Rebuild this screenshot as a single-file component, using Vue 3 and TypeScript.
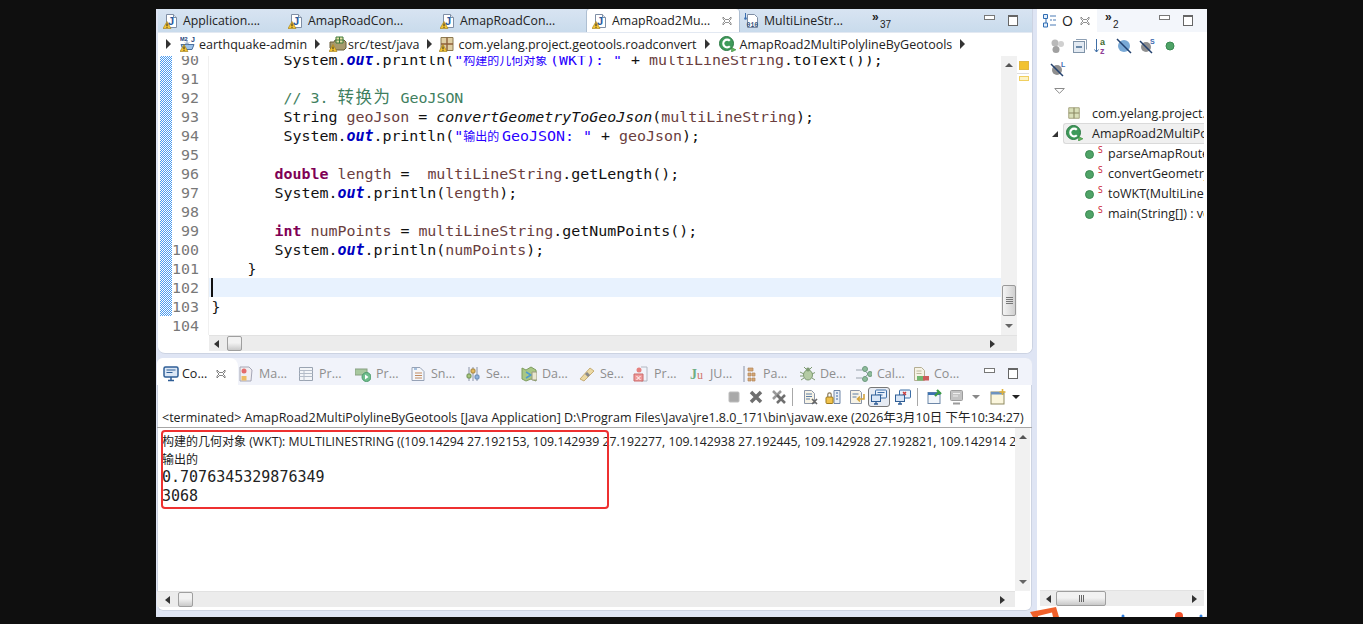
<script setup lang="ts">
type Seg = [string, string]

const editorTabs = [
  { label: 'Application....', icon: 'java', w: 125 },
  { label: 'AmapRoadCon...', icon: 'java', w: 152 },
  { label: 'AmapRoadCon...', icon: 'java', w: 152 },
  { label: 'AmapRoad2Mu...', icon: 'java', w: 152, active: true },
  { label: 'MultiLineStr...', icon: 'classfile', w: 112 },
]

const consoleTabs = [
  { label: 'Ma...', icon: 'markers', w: 60 },
  { label: 'Pr...', icon: 'table', w: 57 },
  { label: 'Pr...', icon: 'progress', w: 55 },
  { label: 'Sn...', icon: 'snippets', w: 55 },
  { label: 'Se...', icon: 'servers', w: 56 },
  { label: 'Da...', icon: 'map', w: 58 },
  { label: 'Se...', icon: 'search', w: 54 },
  { label: 'Pr...', icon: 'problems', w: 56 },
  { label: 'JU...', icon: 'junit', w: 53 },
  { label: 'Pa...', icon: 'package', w: 57 },
  { label: 'De...', icon: 'bug', w: 57 },
  { label: 'Cal...', icon: 'callhier', w: 57 },
  { label: 'Co...', icon: 'coverage', w: 50 },
]

const code: { n: number; segs: Seg[]; cur?: boolean }[] = [
  { n: 90, segs: [['', '        System.'], ['fld', 'out'], ['', '.println('], ['str', '"'], ['str zh', '构建的几何对象 '], ['str', '(WKT): "'], ['', ' + '], ['var', 'multiLineString'], ['', '.toText());']] },
  { n: 91, segs: [] },
  { n: 92, segs: [['', '        '], ['cmt', '// 3. '], ['cmt wide', '转换为'], ['cmt', ' GeoJSON']] },
  { n: 93, segs: [['', '        String '], ['var', 'geoJson'], ['', ' = '], ['it', 'convertGeometryToGeoJson'], ['', '('], ['var', 'multiLineString'], ['', ');']] },
  { n: 94, segs: [['', '        System.'], ['fld', 'out'], ['', '.println('], ['str', '"'], ['str zh', '输出的 '], ['str', 'GeoJSON: "'], ['', ' + '], ['var', 'geoJson'], ['', ');']] },
  { n: 95, segs: [] },
  { n: 96, segs: [['', '       '], ['kw', 'double'], ['', ' '], ['var', 'length'], ['', ' =  '], ['var', 'multiLineString'], ['', '.getLength();']] },
  { n: 97, segs: [['', '       System.'], ['fld', 'out'], ['', '.println('], ['var', 'length'], ['', ');']] },
  { n: 98, segs: [] },
  { n: 99, segs: [['', '       '], ['kw', 'int'], ['', ' '], ['var', 'numPoints'], ['', ' = '], ['var', 'multiLineString'], ['', '.getNumPoints();']] },
  { n: 100, segs: [['', '       System.'], ['fld', 'out'], ['', '.println('], ['var', 'numPoints'], ['', ');']] },
  { n: 101, segs: [['', '    }']] },
  { n: 102, segs: [], cur: true },
  { n: 103, segs: [['', '}']] },
  { n: 104, segs: [] },
]

const methods = ['parseAmapRoute', 'convertGeometryToGeoJson', 'toWKT(MultiLineString)', 'main(String[]) : void']
const firstLine =
  ' (WKT): MULTILINESTRING ((109.14294 27.192153, 109.142939 27.192277, 109.142938 27.192445, 109.142928 27.192821, 109.142914 27.193012, 109.142901'
</script>

<template>
  <div class="screen">
    <svg class="sprite" aria-hidden="true">
      <defs>
        <symbol id="warn" viewBox="0 0 16 16"><path d="M4 8.500 8 15.500H0z" fill="#f4c331" stroke="#a07c14" stroke-width=".6" /><path d="M4 10.500v2.600M4 13.800v1" stroke="#222" /></symbol>
        <symbol id="java" viewBox="0 0 16 16"><path d="M3.500 1.500h7l3 3v10h-10z" fill="#fff" stroke="#7f8ea5" /><path d="M10.500 1.500v3h3" fill="#dfe6f0" stroke="#7f8ea5" /><text x="5" y="12" font-family="Liberation Sans" font-size="11" font-weight="700" fill="#2b5a9e">J</text></symbol>
        <symbol id="classfile" viewBox="0 0 16 16"><path d="M3.500 1.500h7l3 3v10h-10z" fill="#fff" stroke="#7f8ea5" /><path d="M1.500 0v5" stroke="#3b6fb0" /><circle cx="1.500" cy="5.500" r="1.300" fill="#3b6fb0" /><text x="2.500" y="14" font-family="Liberation Mono" font-size="6.500" font-weight="700" fill="#30507c">010</text></symbol>
        <symbol id="mvn" viewBox="0 0 16 16"><path d="M1 8.500h13l-2 5H3z" fill="#9dc3ea" stroke="#4a6f9e" /><path d="M7 4v4M5 6.500 7 8.500l2-2" fill="none" stroke="#7b96b8" /><text x="0" y="5" font-family="Liberation Sans" font-size="5.500" font-weight="700" fill="#23427a">M2</text><text x="11" y="6" font-family="Liberation Sans" font-size="7" font-weight="700" fill="#23427a">J</text></symbol>
        <symbol id="srcf" viewBox="0 0 18 16"><path d="M1 6h4l1-2h9l2 2v6l-2 2H3l-2-2z" fill="#a89a6c" stroke="#6a5f3c" /><path d="M7 1h7v6H7zM10.500 1v6M7 4h7" fill="#e7dfa6" stroke="#3f7a3a" /></symbol>
        <symbol id="pkg" viewBox="0 0 16 16"><path d="M2 1.500h12v13H2z" fill="#e0cfa4" stroke="#8d7a50" /><path d="M8 1.500v13M2 8h12" stroke="#8d5f3a" stroke-width="1.400" /></symbol>
        <symbol id="pkg2" viewBox="0 0 16 16"><path d="M2 2h12v12H2z" fill="#d9dfb9" stroke="#9b9a72" /><path d="M8 2v12M2 8h12" stroke="#8b8a64" stroke-width="1.300" /></symbol>
        <symbol id="cls" viewBox="0 0 18 16"><circle cx="7.500" cy="7.500" r="7" fill="#3f9a5a" stroke="#2c7a45" /><path d="M10.800 4.800a3.800 3.800 0 1 0 0 5.400" fill="none" stroke="#fff" stroke-width="2.200" /><path d="M12.500 11.500v4.500l4.500-2.200z" fill="#5fb65a" stroke="#2f7f33" stroke-width=".5" /></symbol>
        <symbol id="monitor" viewBox="0 0 16 16"><rect x="1" y="1" width="14" height="10" rx="1.500" fill="#dbe7f6" stroke="#2f5e96" stroke-width="1.500" /><path d="M3.500 4h9M3.500 6.500h6" stroke="#2f5e96" /><path d="M5 14.500h6M8 11v3" stroke="#2f5e96" stroke-width="1.500" /></symbol>
        <symbol id="markers" viewBox="0 0 16 16"><path d="M2 1h9l3 3-1 11H2z" fill="#f0eef2" stroke="#a5a6b5" /><circle cx="6" cy="5" r="2.500" fill="#e46c6c" /><path d="M3.500 10h5v4.500h-5z" fill="#edbc64" /></symbol>
        <symbol id="table" viewBox="0 0 16 16"><path d="M1.500 1.500h13v13h-13z" fill="#f3f5f8" stroke="#9aa4b2" /><path d="M1.500 4.500h13M1.500 7.500h13M1.500 10.500h13M6 4.500v10" stroke="#b4bcc8" /></symbol>
        <symbol id="progress" viewBox="0 0 16 16"><rect x="0" y="3" width="12" height="6" fill="#a7c89e" stroke="#88a082" /><circle cx="11.500" cy="11" r="4.500" fill="#6fbe8c" stroke="#4f9a6d" /><path d="M10 8.500v5l3.500-2.500z" fill="#fff" /></symbol>
        <symbol id="snippets" viewBox="0 0 16 16"><path d="M2 1.500h8l4 4v9H2z" fill="#f4f6fa" stroke="#96a2b6" /><path d="M5 7h7M5 9.500h7M5 12h7" stroke="#c08a60" /><path d="M4 3h3" stroke="#5b8bc2" /></symbol>
        <symbol id="servers" viewBox="0 0 16 16"><path d="M4 1v14M8 1v14M12 1v14" stroke="#8a93a6" /><rect x="2" y="8" width="4" height="4" rx="1" fill="#a6c77d" stroke="#6f8e51" /><rect x="6" y="3" width="4" height="4" rx="1" fill="#e3b95d" stroke="#a3833f" /><rect x="10" y="9" width="4" height="4" rx="1" fill="#90b3dd" stroke="#6488b3" /></symbol>
        <symbol id="map" viewBox="0 0 16 16"><path d="M1 2l4 2 5-3 5 3v11l-5-2-5 2-4-2z" fill="#a9c785" stroke="#7e9c5f" /><path d="M5 6l5 3-5 3" fill="none" stroke="#4e9ad0" stroke-width="1.500" /><path d="M11 6h5v8h-5z" fill="#e8e6d0" stroke="#9a9a80" /></symbol>
        <symbol id="search" viewBox="0 0 16 16"><path d="M1 13 11 2l4 3L5 15z" fill="#ecd9a4" stroke="#c6ad76" /><path d="M7 7l3 3" stroke="#8a8a8a" stroke-width="3" /></symbol>
        <symbol id="problems" viewBox="0 0 16 16"><path d="M8 1h6v14H8" fill="none" stroke="#b2b7c2" /><circle cx="6" cy="4" r="2.500" fill="#e6807e" /><path d="M1 8h9v7H1z" fill="#f09a9a" stroke="#c96a6a" /><path d="M3.500 10 7.500 14M7.500 10 3.500 14" stroke="#fff" /></symbol>
        <symbol id="junit" viewBox="0 0 16 16"><text x="1" y="13" font-family="Liberation Serif" font-size="14" font-weight="700" fill="#6fae84">J</text><text x="8" y="13" font-family="Liberation Serif" font-size="12" fill="#d0746c">u</text></symbol>
        <symbol id="package" viewBox="0 0 16 16"><path d="M2 0v16" stroke="#8a93a6" /><path d="M6 2h5v3H6zM6 7h3v3H6zM6 12h3v3H6zM10 7h3v3h-3zM10 12h3v3h-3z" fill="#d6a877" stroke="#b38558" stroke-width=".7" /></symbol>
        <symbol id="bug" viewBox="0 0 16 16"><ellipse cx="9" cy="9" rx="4.500" ry="5" fill="#b4cba4" stroke="#7e9a72" /><circle cx="9" cy="3.500" r="2" fill="#7e9a72" /><path d="M1 6l4 2M1 10h3M2 14l3-2M17 6l-4 2M16 14l-3-2M5 1l2 2M13 1l-2 2" stroke="#7e9a72" fill="none" /></symbol>
        <symbol id="callhier" viewBox="0 0 16 16"><path d="M0 4h6M0 12h6M8 4l4 4-4 4" fill="none" stroke="#9aa3ac" /><circle cx="9" cy="3" r="2.500" fill="#8cbb9a" stroke="#6f9a7e" /><circle cx="9" cy="13" r="2.500" fill="#8cbb9a" stroke="#6f9a7e" /><circle cx="14" cy="8" r="2.500" fill="#8cbb9a" stroke="#6f9a7e" /></symbol>
        <symbol id="coverage" viewBox="0 0 16 16"><path d="M1.500 1.500h7l3 3v10h-10z" fill="#f6f3e6" stroke="#b5ae93" /><path d="M3.500 5h5M3.500 7.500h5" stroke="#bdb89f" /><rect x="4" y="10" width="6" height="4.500" fill="#71b66f" /><rect x="10" y="10" width="6" height="4.500" fill="#cc5c5c" /></symbol>
        <symbol id="outline" viewBox="0 0 14 14"><path d="M.5.500h4v4h-4zM.5 9h4v4h-4z" fill="#e3eefb" stroke="#2f6db3" /><path d="M7 2h6M7 6h2M10 6h3M7 11h6" stroke="#4b7bb5" /><path d="M3 4.500V9" stroke="#2f6db3" /></symbol>
      </defs>
    </svg>

    <div class="app">
      <div class="leftcol">
        <section class="editor">
          <div class="tabbar">
            <div v-for="(t, i) in editorTabs" :key="i" class="etab" :class="{ active: t.active }" :style="{ width: t.w + 'px' }">
              <span class="ic16">
                <svg width="16" height="16"><use :href="'#' + t.icon" /></svg>
                <svg v-if="t.icon === 'java'" class="ov" width="16" height="16"><use href="#warn" /></svg>
              </span>
              <span class="elabel">{{ t.label }}</span>
              <svg v-if="t.active" class="xbtn" width="10" height="10" viewBox="0 0 10 10"><path d="M1 1l3 3 1-1 1 1 3-3 0 2-2 2 2 2 0 2-3-3-1 1-1-1-3 3 0-2 2-2-2-2z" fill="#fff" stroke="#777" stroke-width=".8" /></svg>
            </div>
            <div class="chev"><span>»</span><sub>37</sub></div>
            <div class="grow" />
            <div class="winbtns">
              <span class="minb" /><span class="maxb" />
            </div>
          </div>

          <div class="crumbs">
            <i class="tri first" />
            <span class="ic16 a"><svg width="16" height="16"><use href="#mvn" /></svg><svg class="ov" width="16" height="16"><use href="#warn" /></svg></span>
            <span>earthquake-admin</span>
            <i class="tri" />
            <span class="ic18 b"><svg width="18" height="16"><use href="#srcf" /></svg><svg class="ov" width="16" height="16"><use href="#warn" /></svg></span>
            <span>src/test/java</span>
            <i class="tri t3" />
            <span class="ic16 a"><svg width="16" height="16"><use href="#pkg" /></svg><svg class="ov" width="16" height="16"><use href="#warn" /></svg></span>
            <span>com.yelang.project.geotools.roadconvert</span>
            <i class="tri" />
            <span class="ic18 c"><svg width="18" height="16"><use href="#cls" /></svg></span>
            <span>AmapRoad2MultiPolylineByGeotools</span>
            <i class="tri" />
          </div>

          <div class="editbody">
            <div class="mainpane">
              <div class="codeview">
                <div class="gutter">
                  <div class="dither" />
                </div>
                <div class="lines">
                  <div v-for="l in code" :key="l.n" class="line" :class="{ cur: l.cur }">
                    <span class="num">{{ l.n }}</span>
                    <span class="src"><i v-if="l.cur" class="caret" /><span v-for="(s, i) in l.segs" :key="i" :class="s[0]">{{ s[1] }}</span></span>
                  </div>
                </div>
                <div class="vscroll">
                  <i class="arr up" />
                  <div class="vthumb"><b /><b /><b /><b /></div>
                  <i class="arr down" />
                </div>
              </div>
              <div class="hscroll ed">
                <i class="arr left" />
                <div class="hthumb small" />
                <div class="grow" />
                <i class="arr right" />
              </div>
            </div>
            <div class="ruler">
              <span class="mark" />
              <span class="rule" />
              <span class="mark2" />
            </div>
          </div>
        </section>

        <section class="console">
          <div class="ctabs">
            <div class="ctab on">
              <svg width="16" height="16"><use href="#monitor" /></svg>
              <span class="clab">Co...</span>
              <svg class="xbtn" width="10" height="10" viewBox="0 0 10 10"><path d="M1 1l3 3 1-1 1 1 3-3 0 2-2 2 2 2 0 2-3-3-1 1-1-1-3 3 0-2 2-2-2-2z" fill="#fff" stroke="#666" stroke-width=".8" /></svg>
            </div>
            <div v-for="(t, i) in consoleTabs" :key="i" class="ctab" :style="{ width: t.w + 'px' }">
              <svg width="16" height="16"><use :href="'#' + t.icon" /></svg>
              <span>{{ t.label }}</span>
            </div>
            <div class="grow" />
            <div class="winbtns">
              <span class="minb" /><span class="maxb" />
            </div>
          </div>

          <div class="ctools">
            <svg width="12" height="12" viewBox="0 0 12 12"><rect x="1" y="1" width="10" height="10" rx="1" fill="#a9a9a9" stroke="#bdbdbd" /></svg>
            <svg class="m10" width="14" height="14" viewBox="0 0 14 14"><path d="M2 2l10 10M12 2 2 12" stroke="#6f6f6f" stroke-width="3.500" /></svg>
            <svg class="m9" width="16" height="16" viewBox="0 0 16 16"><path d="M2 2l8 8M10 2 2 10" stroke="#9a9a9a" stroke-width="2.500" /><path d="M6 6l8 8M14 6l-8 8" stroke="#6f6f6f" stroke-width="2.500" /></svg>
            <span class="tsep s1" />
            <svg class="m9" width="16" height="16" viewBox="0 0 16 16"><path d="M2.500 1.500h7l3 3v10h-10z" fill="#f7f3e6" stroke="#8b96a8" /><path d="M4 5h6M4 7.500h6M4 10h4" stroke="#5d7ea6" /><path d="M10 10l5 5M15 10l-5 5" stroke="#666" stroke-width="1.700" /></svg>
            <svg class="m7" width="16" height="16" viewBox="0 0 16 16"><path d="M9 1.500h6v13H9z" fill="#e8eff8" stroke="#6e86a8" /><path d="M11 4h2M11 7h2M11 10h2" stroke="#3c66a0" /><rect x="1" y="8" width="7" height="6.500" rx="1" fill="#f0c24d" stroke="#9d7a1c" /><path d="M2.800 8V5.500a1.700 1.700 0 0 1 3.400 0V8" fill="none" stroke="#8a7a5a" stroke-width="1.200" /></svg>
            <svg class="m8" width="16" height="16" viewBox="0 0 16 16"><path d="M1.500 1.500h9l2 2v11h-11z" fill="#f7f3e6" stroke="#8b96a8" /><path d="M3.500 5h6M3.500 8h4" stroke="#5d7ea6" /><path d="M15 5v5H9M11 7.500 8.500 10l2.500 2.500" fill="none" stroke="#d2a33b" stroke-width="1.600" /></svg>
            <span class="tbtn-on">
              <svg width="16" height="16" viewBox="0 0 16 16"><rect x="4.500" y="1" width="11" height="8" rx="1" fill="#e8f0fb" stroke="#3d6ea6" /><path d="M6.500 3.500h7M6.500 6h5" stroke="#3d6ea6" /><rect x=".5" y="6" width="9" height="6.500" fill="#d8e6f7" stroke="#2f5e96" /><path d="M3 15h4M5 12.500V15" stroke="#2f5e96" stroke-width="1.300" /></svg>
            </span>
            <svg class="m5" width="16" height="16" viewBox="0 0 16 16"><rect x="4.500" y="1" width="11" height="8" rx="1" fill="#e8f0fb" stroke="#3d6ea6" /><path d="M8 3l3 3M11 3 8 6" stroke="#cf3b3b" stroke-width="1.400" /><rect x=".5" y="6" width="9" height="6.500" fill="#d8e6f7" stroke="#2f5e96" /><path d="M3 15h4M5 12.500V15" stroke="#2f5e96" stroke-width="1.300" /></svg>
            <span class="tsep" />
            <svg class="m10" width="16" height="16" viewBox="0 0 16 16"><rect x="1" y="3.500" width="12" height="11" fill="#f2f6fb" stroke="#6d87a8" /><path d="M1 3.500h12v2.500H1z" fill="#3b72b1" /><path d="M8 7l4-4M10 1l4 4" stroke="#3a9a45" stroke-width="2.200" /></svg>
            <svg class="mmon" width="16" height="16" viewBox="0 0 16 16"><rect x="1.500" y="1.500" width="12" height="10" rx="1" fill="#c3c3c3" stroke="#9c9c9c" /><path d="M4 4.500h7M4 7h5" stroke="#eee" /><path d="M4 14.500h7" stroke="#9c9c9c" stroke-width="2" /></svg>
            <i class="dn gray" />
            <svg class="mlast" width="16" height="16" viewBox="0 0 16 16"><rect x="1" y="3" width="13" height="12" fill="#fbf6dd" stroke="#8f8a60" /><path d="M1 3h13v2.500H1z" fill="#6e93bf" /><path d="M12.500 0v6M9.500 3h6" stroke="#e0b23a" stroke-width="1.600" /></svg>
            <i class="dn black" />
          </div>

          <div class="termline">&lt;terminated&gt; AmapRoad2MultiPolylineByGeotools [Java Application] D:\Program Files\Java\jre1.8.0_171\bin\javaw.exe (2026年3月10日 下午10:34:27)</div>

          <div class="cbody">
            <div class="coutput">
              <div class="otext"><span class="ozh">构建的几何对象</span>{{ firstLine }}</div>
              <div class="otext"><span class="ozh">输出的</span></div>
              <div class="omono">0.7076345329876349</div>
              <div class="omono">3068</div>
            </div>
            <div class="cvscroll">
              <i class="arr up" />
              <i class="arr down" />
            </div>
          </div>
          <div class="hscroll con">
            <i class="arr left" />
            <div class="hthumb small" />
            <div class="grow" />
            <i class="arr right" />
          </div>
        </section>
      </div>

      <aside class="outline">
        <div class="otabs">
          <div class="otab">
            <svg width="14" height="14"><use href="#outline" /></svg>
            <span class="olabel">O</span>
            <svg class="xbtn o" width="10" height="10" viewBox="0 0 10 10"><path d="M1 1l3 3 1-1 1 1 3-3 0 2-2 2 2 2 0 2-3-3-1 1-1-1-3 3 0-2 2-2-2-2z" fill="#fff" stroke="#777" stroke-width=".8" /></svg>
          </div>
          <div class="chev o"><span>»</span><sub>2</sub></div>
          <div class="grow" />
          <div class="winbtns">
            <span class="minb" /><span class="maxb" />
          </div>
        </div>
        <div class="otools">
          <svg width="16" height="16" viewBox="0 0 16 16"><circle cx="5" cy="5" r="3.500" fill="#b9b9b9" /><circle cx="11" cy="6" r="3" fill="#d0d0d0" /><circle cx="6" cy="11.500" r="3.500" fill="#a0a0a0" /></svg>
          <svg width="14" height="14" viewBox="0 0 14 14"><path d="M3 .5h10.500v10" fill="none" stroke="#8ea0b4" /><rect x=".5" y="2.500" width="11" height="11" fill="#e3eaf2" stroke="#7f93a8" /><path d="M3 8h6" stroke="#456a90" stroke-width="1.500" /></svg>
          <svg class="az" width="14" height="16" viewBox="0 0 14 16"><path d="M2.500 1v13M.5 11.500l2 2.500 2-2.500" fill="none" stroke="#3f6ea5" /><text x="6" y="7" font-family="Liberation Sans" font-size="9" font-weight="700" fill="#3f6a2f">a</text><text x="6" y="15.500" font-family="Liberation Sans" font-size="9" font-weight="700" fill="#8f3f98">z</text></svg>
          <svg width="16" height="16" viewBox="0 0 16 16"><circle cx="8" cy="8" r="6" fill="#79a9d6" /><path d="M1 1l14 14" stroke="#22406e" stroke-width="1.500" /></svg>
          <svg width="16" height="16" viewBox="0 0 16 16"><circle cx="7" cy="9" r="5" fill="#8f8f8f" /><path d="M1 3l12 12" stroke="#22406e" stroke-width="1.500" /><text x="11" y="6" font-family="Liberation Sans" font-size="7" font-weight="700" fill="#3c6bb0">S</text></svg>
          <svg class="dot" width="10" height="10" viewBox="0 0 10 10"><circle cx="5" cy="5" r="4" fill="#4fa367" stroke="#3a8a52" /></svg>
          <svg class="brk" width="16" height="16" viewBox="0 0 16 16"><circle cx="7" cy="9" r="5" fill="#8f8f8f" /><path d="M1 3l12 12" stroke="#22406e" stroke-width="1.500" /><text x="11" y="6" font-family="Liberation Sans" font-size="7" font-weight="700" fill="#3c6bb0">L</text></svg>
        </div>
        <svg class="menutri" width="11" height="6" viewBox="0 0 11 6"><path d="M.7.500h9.600L5.500 5.300z" fill="#fff" stroke="#8a8a8a" /></svg>
        <div class="tree">
          <div class="trow r1"><svg width="14" height="14"><use href="#pkg2" /></svg><span>com.yelang.project.geotools.roadconvert</span></div>
          <div class="trow r2">
            <i class="open" />
            <div class="selbox"><svg width="18" height="16"><use href="#cls" /></svg><span>AmapRoad2MultiPolylineByGeotools</span></div>
          </div>
          <div v-for="m in methods" :key="m" class="trow r3">
            <i class="mdot" /><sup>S</sup><span>{{ m }}</span>
          </div>
        </div>
        <div class="hscroll out">
          <i class="arr left" />
          <div class="hthumb wide"><b /><b /><b /></div>
          <div class="grow" />
          <i class="arr right" />
        </div>
      </aside>
    </div>

    <div class="redbox" />
    <svg class="strip" width="177" height="10" viewBox="0 0 177 10">
      <path d="M0 5 26 0l3 10H3z" fill="#f1602a" />
      <path d="M8 9 22 5.500l1 4.500H8z" fill="#fff" />
      <circle cx="149" cy="9" r="4" fill="#f1502a" />
      <circle cx="93" cy="9" r="1.500" fill="#2f7fe0" />
      <circle cx="171" cy="9" r="1.500" fill="#2f7fe0" />
    </svg>
  </div>
</template>

<style>
html, body { margin: 0; background: #0f0f0f; overflow: hidden; }
</style>

<style scoped>
.screen {
  position: relative;
  width: 1363px;
  height: 624px;
  padding: 9px 156px 7px;
  box-sizing: border-box;
  background: #0f0f0f;
  overflow: hidden;
  font-family: "Open Sans", "Noto Sans CJK SC", sans-serif;
  font-size: 12px;
  color: #222;
}
.sprite { position: absolute; width: 0; height: 0; }
.app { display: flex; height: 608px; width: 1051px; background: #dfe5f4; }
.leftcol { width: 877px; margin-left: 1px; display: flex; flex-direction: column; gap: 4px; }
.grow { flex: 1; }

.editor { height: 345px; background: #fff; border-radius: 0 0 7px 7px; border: 1px solid #ccd3e2; border-top: 0; border-left: 0; box-sizing: border-box; display: flex; flex-direction: column; overflow: hidden; margin-left: 1px; width: 875px; }
.tabbar { height: 23px; flex: none; display: flex; align-items: center; background: linear-gradient(#d8e4f2, #c9dbec); }
.etab { height: 23px; flex: none; box-sizing: border-box; display: flex; align-items: center; padding-left: 5px; gap: 4px; white-space: nowrap; }
.etab.active { background: #fff; border-radius: 3px 3px 0 0; box-shadow: 1px 0 0 #aebfd2, -1px 0 0 #aebfd2; }
.elabel { font-size: 12.300px; }
.xbtn { margin-left: 8px; flex: none; }
.ic16 { position: relative; width: 16px; height: 16px; flex: none; display: block; }
.ic18 { position: relative; width: 18px; height: 16px; flex: none; display: block; }
.ov { position: absolute; left: 0; top: 0; }
.chev { margin-left: 21px; position: relative; width: 26px; height: 20px; font-family: "Liberation Sans", sans-serif; font-weight: 700; font-size: 12px; color: #222; line-height: 12px; }
.chev span { position: absolute; left: 0; top: 0; }
.chev sub { position: absolute; left: 8px; top: 8px; font-size: 10px; font-weight: 400; line-height: 12px; vertical-align: baseline; }
.winbtns { display: flex; align-items: center; gap: 13px; padding-right: 14px; }
.minb { width: 9px; height: 3px; border: 1px solid #777; background: #fff; box-sizing: content-box; margin-top: -6px; }
.maxb { width: 8px; height: 8px; border: 1px solid #666; border-top-width: 2px; background: #fff; }

.crumbs { height: 24px; flex: none; display: flex; align-items: center; font-size: 12.500px; background: #fff; white-space: nowrap; box-shadow: inset 0 1px 0 #e3e9f2; }
.tri { width: 0; height: 0; flex: none; border-left: 5px solid #333; border-top: 5px solid transparent; border-bottom: 5px solid transparent; margin: 0 9px 0 8px; }
.tri.first { margin-left: 8px; margin-right: 9px; }
.tri.t3 { margin-right: 7px; }
.crumbs .ic16.a { margin-right: 3px; }
.crumbs .ic18.b { margin-right: 1px; }
.crumbs .ic18.c { margin-right: 3px; }

.editbody { flex: 1; display: flex; min-height: 0; }
.mainpane { width: 859px; flex: none; display: flex; flex-direction: column; }
.codeview { height: 279px; display: flex; overflow: hidden; position: relative; flex: none; }
.gutter { width: 14px; flex: none; padding-left: 2px; box-sizing: border-box; }
.dither { width: 12px; height: 260px; background: repeating-conic-gradient(#4a9bf0 0 25%, #fff 0 50%) 0 0 / 2px 2px; }
.lines { width: 829px; flex: none; margin-top: -6px; font-family: "DejaVu Sans Mono", monospace; font-size: 14.940px; }
.line { height: 19px; line-height: 21px; display: flex; white-space: pre; }
.line.cur .src { background: #e8f2fe; }
.num { width: 27px; flex: none; text-align: right; color: #787878; margin-right: 10px; }
.src { flex: 1; position: relative; padding-left: 2.500px; color: #111; box-shadow: -1px 0 0 #f0f0f0; }
.caret { position: absolute; left: 2px; top: 0; width: 2px; height: 19px; background: #111; }
.fld { color: #0000c0; font-weight: 700; font-style: italic; }
.str { color: #2a00ff; }
.zh { font-family: "Noto Sans CJK SC", sans-serif; font-size: 12px; line-height: 1; }
.var { color: #6a3e3e; }
.kw { color: #7f0055; font-weight: 700; }
.it { font-style: italic; }
.cmt { color: #3f7f5f; }
.wide { font-family: "Noto Sans CJK SC", sans-serif; font-size: 16.500px; letter-spacing: 1.500px; line-height: 1; }

.vscroll { width: 16px; flex: none; background: #f1f1f1; position: relative; }
.arr { position: absolute; width: 0; height: 0; }
.arr.up { left: 4px; top: 7px; border: 4px solid transparent; border-top: 0; border-bottom: 4px solid #555; }
.arr.down { left: 4px; bottom: 7px; border: 4px solid transparent; border-bottom: 0; border-top: 4px solid #666; }
.vthumb { position: absolute; left: 1px; top: 229px; width: 12px; height: 29px; border: 1px solid #9a9a9a; border-radius: 2px; background: linear-gradient(90deg, #f4f4f4, #d0d0d0); display: flex; flex-direction: column; gap: 1px; align-items: center; justify-content: center; }
.vthumb b { width: 7px; height: 1px; background: #777; }
.ruler { width: 15px; background: #fff; position: relative; flex: none; }
.mark { position: absolute; left: 2px; top: 5px; width: 8px; height: 7px; background: #f2c230; border: 1px solid #e2b840; }
.rule { position: absolute; left: 0; top: 17px; width: 12px; height: 1px; background: #ddd; }
.mark2 { position: absolute; left: 2px; top: 20px; width: 8px; height: 3px; border: 1px solid #f0cf60; background: #fdf3c4; }

.hscroll { height: 16px; background: #ececec; position: relative; display: flex; align-items: center; flex: none; border-top: 1px solid #e2e2e2; box-sizing: border-box; }
.hscroll .arr { position: static; flex: none; }
.arr.left { border: 4px solid transparent; border-left: 0; border-right: 5px solid #333; }
.arr.right { border: 4px solid transparent; border-right: 0; border-left: 5px solid #333; }
.hscroll.ed { margin-left: 51px; width: 808px; padding: 0 22px 0 5px; }
.hthumb { height: 13px; border: 1px solid #9f9f9f; border-radius: 2px; background: linear-gradient(#f2f2f2 45%, #c9c9c9); box-sizing: border-box; }
.hthumb.small { width: 15px; margin-left: 8px; height: 15px; }
.hthumb.wide { width: 50px; height: 15px; margin-left: 5px; display: flex; align-items: center; justify-content: center; gap: 1px; }
.hthumb.wide b { width: 1px; height: 7px; background: #666; }

.console { height: 253px; background: #fff; border-radius: 6px; display: flex; flex-direction: column; overflow: hidden; width: 875px; box-shadow: 0 0 0 1px #ccd3e2 inset; position: relative; }
.ctabs { height: 27px; flex: none; display: flex; align-items: center; background: #f1f3fa; white-space: nowrap; color: #8e8e8e; font-size: 12.500px; box-sizing: border-box; }
.ctab { height: 27px; flex: none; display: flex; align-items: center; gap: 5px; box-sizing: border-box; padding-top: 4px; }
.ctab.on { width: 81px; background: #fff; color: #222; padding-left: 6px; border-radius: 0 8px 0 0; gap: 3px; }
.ctab.on .xbtn { margin-left: 6px; }
.ctabs .winbtns { padding-top: 4px; }
.clab { color: #222; }
.ctools { height: 23px; flex: none; display: flex; align-items: center; justify-content: flex-end; padding-right: 12px; }
.ctools svg { flex: none; }
.m9 { margin-left: 8px; } .m7 { margin-left: 7px; } .m8 { margin-left: 8px; } .m5 { margin-left: 5px; } .m10 { margin-left: 9px; }
.mmon { margin-left: 6px; } .mlast { margin-left: 10px; }
.tsep { width: 1px; height: 18px; background: #a8a8a8; margin-left: 6px; }
.tsep.s1 { margin-left: 5px; }
.tsep.s1 + .m9 { margin-left: 9px; }
.tbtn-on { width: 22px; height: 20px; margin-left: 3px; border: 1px solid #777; border-radius: 3px; background: #e6ebf3; display: flex; align-items: center; justify-content: center; box-sizing: border-box; }
.dn { width: 0; height: 0; border: 4px solid transparent; border-bottom: 0; }
.dn.gray { border-top: 4px solid #888; margin-left: 7px; }
.dn.black { border-top: 4px solid #222; margin-left: 6px; }
.termline { height: 19px; line-height: 19px; flex: none; padding-left: 5px; font-size: 12.500px; white-space: nowrap; overflow: hidden; color: #222; border-bottom: 1px solid #a6a6a6; }
.cbody { flex: 1; display: flex; min-height: 0; }
.coutput { width: 858px; flex: none; overflow: hidden; padding: 4px 0 0 5px; box-sizing: border-box; }
.otext { height: 18px; line-height: 18px; font-size: 12.300px; white-space: pre; }
.ozh { font-family: "Noto Sans CJK SC", sans-serif; font-size: 12px; }
.omono { height: 19px; line-height: 19px; font-family: "DejaVu Sans Mono", monospace; font-size: 15px; }
.cvscroll { width: 15px; background: #f1f1f1; position: relative; }
.hscroll.con { width: 858px; padding: 0 10px 0 8px; margin-bottom: 4px; }

.outline { width: 170px; margin-left: 3px; background: #fff; display: flex; flex-direction: column; height: 608px; position: relative; border-radius: 0 0 4px 4px; overflow: hidden; }
.otabs { height: 23px; flex: none; display: flex; align-items: center; background: #f3f6fb; }
.otab { display: flex; align-items: center; height: 23px; padding-left: 6px; width: 60px; box-sizing: border-box; background: #fff; }
.olabel { margin-left: 5px; font-size: 14px; }
.xbtn.o { margin-left: 7px; }
.chev.o { margin-left: 8px; }
.otools { height: 46px; padding: 5px 6px 0 13px; flex: none; display: flex; flex-wrap: wrap; gap: 7px; align-content: flex-start; align-items: center; box-sizing: border-box; width: 144px; margin-top: 1px; }
.az { margin-right: 1px; }
.dot { margin-left: 3px; }
.menutri { display: block; margin: 9px 0 0 17px; flex: none; }
.tree { flex: 1; width: 167px; padding-top: 9px; font-size: 12.500px; overflow: hidden; min-height: 0; }
.trow { height: 20px; display: flex; align-items: center; white-space: nowrap; }
.trow svg { flex: none; }
.trow.r1 { padding-left: 30px; gap: 11px; }
.trow.r2 .open { width: 0; height: 0; margin-left: 15px; margin-right: 5px; border-right: 6px solid #333; border-top: 6px solid transparent; flex: none; margin-top: 2px; }
.selbox { display: flex; align-items: center; gap: 8px; height: 21px; background: #f0f0f0; border: 1px solid #dadada; border-right: 0; border-radius: 3px 0 0 3px; flex: 1; min-width: 0; padding-left: 2px; overflow: hidden; box-sizing: border-box; }
.trow.r3 { padding-left: 48px; position: relative; overflow: hidden; box-sizing: border-box; }
.mdot { width: 7px; height: 7px; border-radius: 50%; background: #4fa367; border: 1px solid #3c8a53; flex: none; margin-top: 3px; }
.trow.r3 sup { color: #c8102e; font-size: 8.500px; margin-left: 4px; line-height: 8px; align-self: flex-start; margin-top: 3px; width: 10px; flex: none; }
.hscroll.out { width: 164px; margin: 0 0 11px 3px; padding: 0 7px 0 6px; flex: none; }

.redbox { position: absolute; left: 161px; top: 430px; width: 448px; height: 79px; border: 2px solid #ee3030; border-radius: 4px; box-sizing: border-box; }
.strip { position: absolute; left: 1030px; top: 607px; }
</style>
